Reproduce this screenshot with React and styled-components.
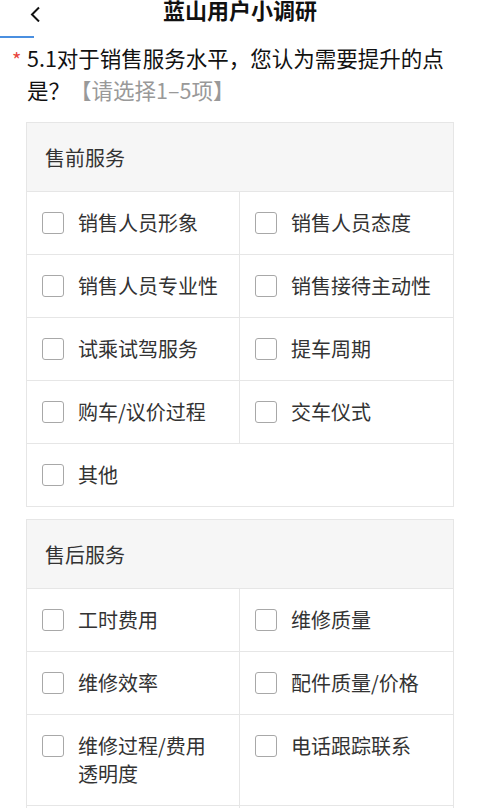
import React from 'react';
import styled, { createGlobalStyle } from 'styled-components';

const GlobalStyle = createGlobalStyle`
  html, body {
    margin: 0;
    padding: 0;
    background: #ffffff;
    font-family: "Noto Sans CJK SC", "Noto Sans", sans-serif;
    color: #333333;
  }
`;

const Page = styled.div`
  width: 480px;
  min-height: 808px;
  background: #ffffff;
  overflow: hidden;
`;

const Header = styled.div`
  height: 22px;
  display: flex;
  align-items: center;
  justify-content: center;
  position: relative;
`;

const Back = styled.div`
  position: absolute;
  left: 28px;
  top: 3px;
  width: 16px;
  height: 16px;
`;

const Title = styled.div`
  font-size: 22px;
  font-weight: 700;
  line-height: 22px;
  color: #111111;
  margin-top: -4px;
`;

const Progress = styled.div`
  margin-top: 14px;
  height: 2px;
  width: 34px;
  background: #4a8fe0;
`;

const Question = styled.div`
  position: relative;
  padding: 4px 16px 0 27px;
  font-size: 21.5px;
  line-height: 32px;
  color: #111111;
`;

const Star = styled.span`
  position: absolute;
  left: 12px;
  top: 6px;
  color: #e8453c;
  font-size: 20px;
`;

const Hint = styled.span`
  color: #999999;
`;

const Card = styled.div`
  margin: ${p => p.top}px 26px 0;
  border: 1px solid #e6e6e6;
`;

const CardHead = styled.div`
  height: 68px;
  background: #f6f6f6;
  display: flex;
  align-items: center;
  padding-left: 18px;
  font-size: 20px;
  color: #333333;
  border-bottom: 1px solid #e6e6e6;
`;

const Grid = styled.div`
  display: grid;
  grid-template-columns: 213px 1fr;
`;

const Cell = styled.div`
  display: flex;
  align-items: flex-start;
  padding: 17px 18px 17px 15px;
  grid-column: ${p => (p.full ? '1 / span 2' : 'auto')};
  border-bottom: ${p => (p.last ? 'none' : '1px solid #e6e6e6')};
  border-right: ${p => (p.left ? '1px solid #e6e6e6' : 'none')};
`;

const Box = styled.span`
  flex-shrink: 0;
  width: 20px;
  height: 20px;
  border: 1px solid #a8a8a8;
  border-radius: 3px;
  margin-top: 3px;
  margin-right: 14px;
`;

const Label = styled.span`
  font-size: 20px;
  line-height: 28px;
  color: #333333;
`;

const Option = ({ text, left, full, last }) => (
  <Cell left={left} full={full} last={last}>
    <Box />
    <Label>{text}</Label>
  </Cell>
);

const Section = ({ title, items, extra, top, lastOpen }) => (
  <Card top={top}>
    <CardHead>{title}</CardHead>
    <Grid>
      {items.map((t, i) => (
        <Option key={t + i} text={t} left={i % 2 === 0} last={!extra && !lastOpen && i >= items.length - 2} />
      ))}
      {extra && <Option text={extra} full last />}
    </Grid>
  </Card>
);

const pre = ['销售人员形象', '销售人员态度', '销售人员专业性', '销售接待主动性', '试乘试驾服务', '提车周期', '购车/议价过程', '交车仪式'];
const after = ['工时费用', '维修质量', '维修效率', '配件质量/价格', '维修过程/费用透明度', '电话跟踪联系', '', ''];

export default function App() {
  return (
    <Page>
      <GlobalStyle />
      <Header>
        <Back>
          <svg width="16" height="16" viewBox="0 0 16 16">
            <path d="M11 1.5 L4 8.5 L11 15.5" fill="none" stroke="#111" strokeWidth="2" />
          </svg>
        </Back>
        <Title>蓝山用户小调研</Title>
      </Header>
      <Progress />
      <Question>
        <Star>*</Star>
        5.1对于销售服务水平，您认为需要提升的点是？<Hint>【请选择1–5项】</Hint>
      </Question>
      <Section top={16} title="售前服务" items={pre} extra="其他" />
      <Section top={12} title="售后服务" items={after} lastOpen />
    </Page>
  );
}
